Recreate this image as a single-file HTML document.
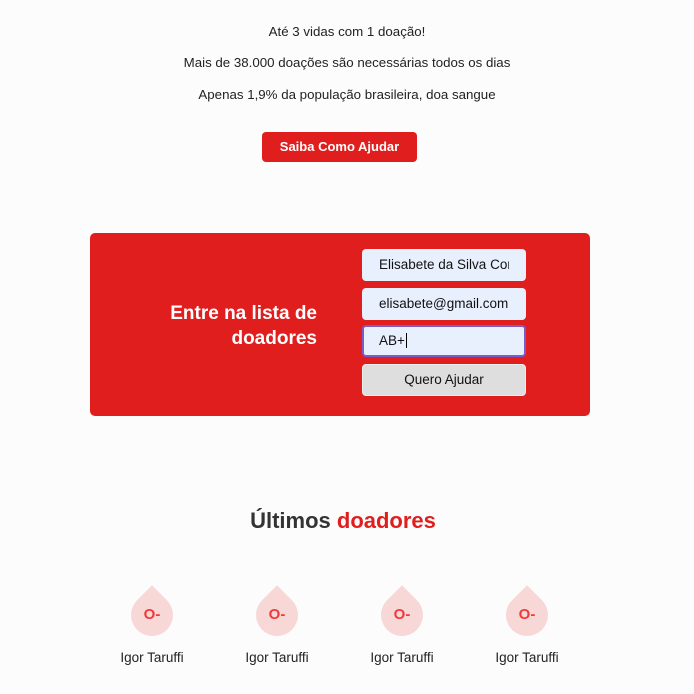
<!DOCTYPE html>
<html><head><meta charset="utf-8"><style>
*{margin:0;padding:0;box-sizing:border-box}
body{width:694px;height:694px;overflow:hidden;background:#fcfcfc;font-family:"Liberation Sans",sans-serif;color:#222;position:relative}
.t{position:absolute;left:0;width:694px;text-align:center;font-size:13.3px}
.btn{position:absolute;left:262px;top:132px;width:155px;height:30px;background:#e01e1e;color:#fff;border-radius:4px;font-weight:bold;font-size:13px;text-align:center;line-height:30px}
.box{position:absolute;left:90px;top:233px;width:500px;height:183px;background:#e01e1e;border-radius:5px}
.h{position:absolute;left:117px;top:301px;width:200px;text-align:right;color:#fff;font-weight:bold;font-size:19px;line-height:25px}
.in{position:absolute;left:362px;width:164px;height:32px;background:#e8f0fe;border-radius:4px;font-size:13.5px;line-height:32px;padding-left:17px;white-space:nowrap;overflow:hidden;color:#111}
.in span.c{display:block;width:130px;overflow:hidden}
.d{position:absolute;width:42px;height:42px;top:594px;background:#f8d7d7;border-radius:50% 0 50% 50%;transform:rotate(-45deg)}
.dl{position:absolute;top:606px;width:60px;text-align:center;color:#f03a3a;font-size:15px;font-weight:bold}
.n{position:absolute;top:650px;width:120px;text-align:center;font-size:13.5px}
</style></head><body>
<div class="t" style="top:24px">Até 3 vidas com 1 doação!</div>
<div class="t" style="top:55px">Mais de 38.000 doações são necessárias todos os dias</div>
<div class="t" style="top:87px">Apenas 1,9% da população brasileira, doa sangue</div>
<div class="btn">Saiba Como Ajudar</div>
<div class="box"></div>
<div class="h">Entre na lista de doadores</div>
<div class="in" style="top:249px"><span class="c">Elisabete da Silva Cordeiro</span></div>
<div class="in" style="top:288px">elisabete@gmail.com</div>
<div class="in" style="top:325px;border:2px solid #7a5bc9;padding-left:15px;line-height:28px">AB+<span style="border-left:1px solid #000;margin-left:1px"></span></div>
<div class="in" style="top:364px;background:#dedede;border:1px solid #eee;padding:0;text-align:center;line-height:30px">Quero Ajudar</div>
<div class="t" style="top:508px;left:-4px;font-size:22px;font-weight:bold;color:#333">Últimos <span style="color:#e01e1e">doadores</span></div>
<div class="d" style="left:131px"></div><div class="dl" style="left:122px">O-</div><div class="n" style="left:92px">Igor Taruffi</div>
<div class="d" style="left:256px"></div><div class="dl" style="left:247px">O-</div><div class="n" style="left:217px">Igor Taruffi</div>
<div class="d" style="left:381px"></div><div class="dl" style="left:372px">O-</div><div class="n" style="left:342px">Igor Taruffi</div>
<div class="d" style="left:506px"></div><div class="dl" style="left:497px">O-</div><div class="n" style="left:467px">Igor Taruffi</div>
</body></html>
